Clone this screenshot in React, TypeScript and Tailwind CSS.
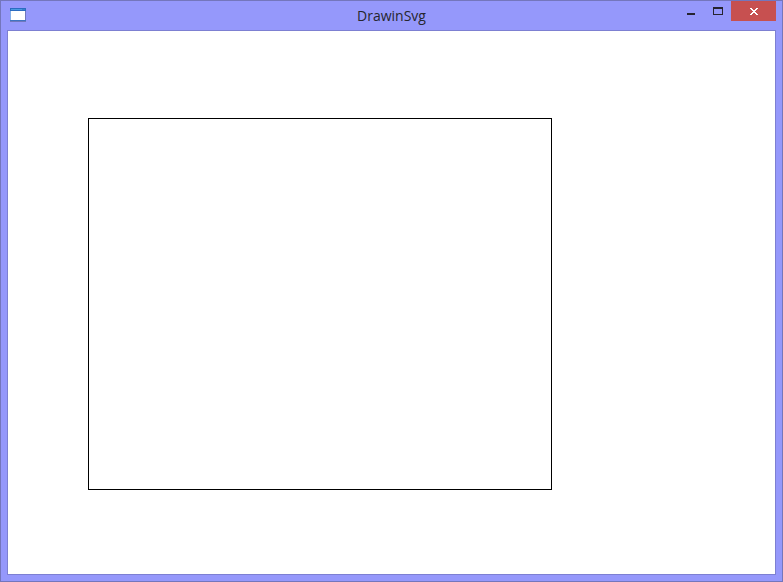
import React from "react";

function AppIcon() {
  return (
    <svg width="16" height="14" viewBox="0 0 16 14" shapeRendering="crispEdges" aria-hidden="true">
      <rect width="16" height="14" fill="#7078bb" />
      <rect width="15" height="13" fill="#86b0e8" />
      <rect width="16" height="3" fill="#2c6cc0" />
      <rect x="1" y="1" width="11" height="1" fill="#4a9be2" />
      <rect x="12" y="1" width="3" height="1" fill="#3a80cc" />
      <rect x="1" y="3" width="14" height="9" fill="#ffffff" />
      <rect y="12" width="16" height="1" fill="#3f74c2" />
    </svg>
  );
}

function TitleBar({ title }: { title: string }) {
  return (
    <header className="grid h-[29px] grid-cols-[1fr_auto_1fr] items-start">
      <div className="pt-[7px] pl-[3px]">
        <AppIcon />
      </div>
      <h1 className="pt-1 text-[14px] leading-[22px] text-[#26262e]">{title}</h1>
      <div className="flex justify-end">
        <button type="button" aria-label="Minimize" className="h-5 w-[27px]">
          <svg width="27" height="20" shapeRendering="crispEdges" aria-hidden="true">
            <rect x="10" y="12" width="8" height="2" fill="#262430" />
          </svg>
        </button>
        <button type="button" aria-label="Maximize" className="h-5 w-[27px]">
          <svg width="27" height="20" shapeRendering="crispEdges" aria-hidden="true">
            <path d="M9 6h10v8H9zM10 8v5h8V8z" fill="#262430" fillRule="evenodd" />
          </svg>
        </button>
        <button type="button" aria-label="Close" className="h-5 w-[45px] bg-[#c75050]">
          <svg width="45" height="20" shapeRendering="crispEdges" aria-hidden="true">
            <path
              d="M19 7h2v1h1v1h2V8h1V7h2v1h-1v1h-1v1h-1v1h1v1h1v1h1v1h-2v-1h-1v-1h-2v1h-1v1h-2v-1h1v-1h1v-1h1v-1h-1V9h-1V8h-1z"
              fill="#ffffff"
            />
          </svg>
        </button>
      </div>
    </header>
  );
}

export default function App() {
  return (
    <div className="flex min-h-screen flex-col border border-[#7476bc] bg-[#9598fb] px-1.5 pb-1.5 font-['Open_Sans','Noto_Sans',sans-serif]">
      <TitleBar title="DrawinSvg" />
      <main className="flex-1 border border-[#7d80d2] bg-white pt-[87px] pl-20">
        <svg width="464" height="372" role="img" aria-label="Rectangle" shapeRendering="crispEdges">
          <rect x="0.5" y="0.5" width="463" height="371" fill="none" stroke="#000000" />
        </svg>
      </main>
    </div>
  );
}
